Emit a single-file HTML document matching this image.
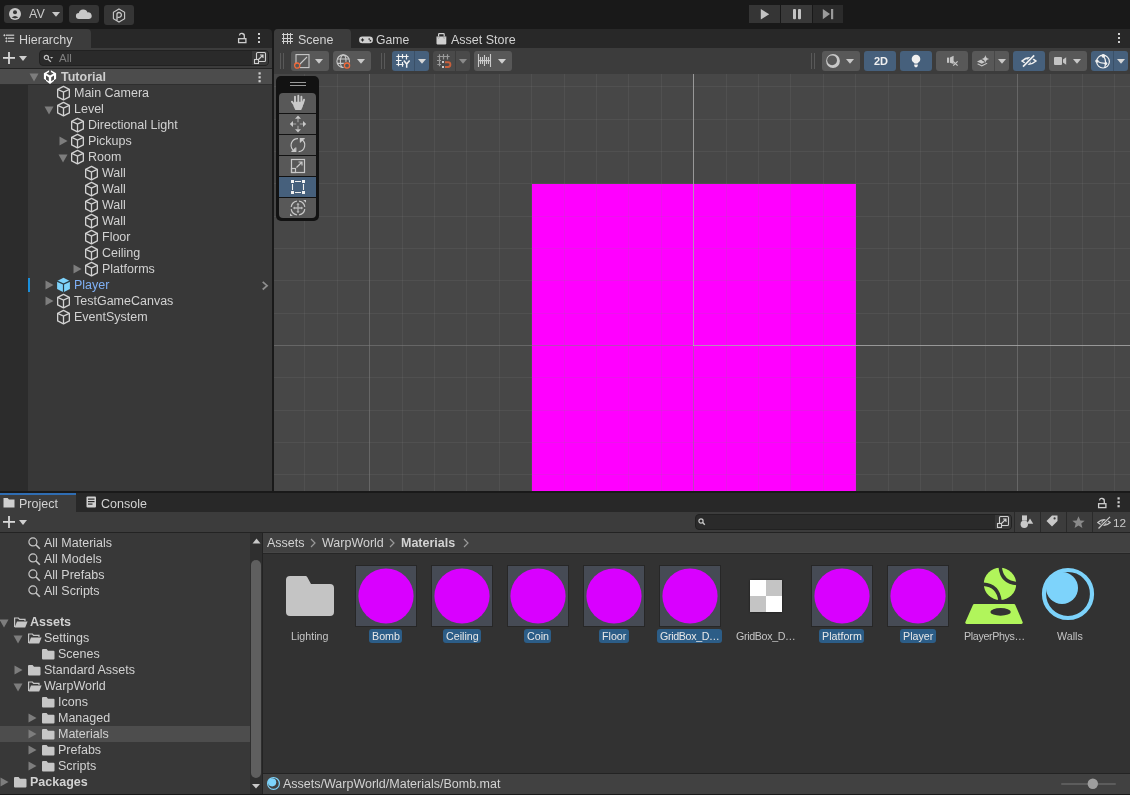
<!DOCTYPE html><html><head><meta charset="utf-8"><style>
html,body{margin:0;padding:0;width:1130px;height:795px;overflow:hidden;background:#191919;}
body{position:relative;font-family:"Liberation Sans", sans-serif;}
.t{position:absolute;white-space:nowrap;will-change:transform;}
svg{overflow:visible}
</style></head><body>
<div style="position:absolute;left:0px;top:0px;width:1130px;height:28px;background:#191919;"></div>
<div style="position:absolute;left:4px;top:5px;width:59px;height:18px;background:#353535;border-radius:3px;"></div>
<div style="position:absolute;left:69px;top:5px;width:30px;height:18px;background:#353535;border-radius:3px;"></div>
<div style="position:absolute;left:104px;top:5px;width:30px;height:20px;background:#353535;border-radius:3px;"></div>
<div style="position:absolute;left:749px;top:5px;width:31px;height:18px;background:#353535;"></div>
<div style="position:absolute;left:781px;top:5px;width:31px;height:18px;background:#393939;"></div>
<div style="position:absolute;left:813px;top:5px;width:30px;height:18px;background:#2b2b2b;"></div>
<svg style="position:absolute;left:9px;top:8px;" width="12" height="12" viewBox="0 0 12 12"><circle cx="6" cy="6" r="6" fill="#c8c8c8"/><circle cx="6" cy="4.3" r="2" fill="#353535"/><path d="M2.6 9.6 Q6 6.6 9.4 9.6 Q6 11.2 2.6 9.6 Z" fill="#353535"/></svg>
<div class="t" style="left:29px;top:6px;font-size:12.5px;line-height:16px;color:#c8c8c8;font-weight:normal;">AV</div>
<svg style="position:absolute;left:52px;top:12px;" width="8" height="5" viewBox="0 0 8 5"><path d="M0 0 L8 0 L4 4.8 Z" fill="#c8c8c8"/></svg>
<svg style="position:absolute;left:76px;top:9px;" width="16" height="10" viewBox="0 0 16 10"><path d="M3 10 a3 3 0 0 1 -0.2 -6 a4.6 4.6 0 0 1 8.8 -0.6 a3.2 3.2 0 0 1 1.4 6.6 Z" fill="#c8c8c8"/></svg>
<svg style="position:absolute;left:112px;top:8px;" width="14" height="15" viewBox="0 0 14 15"><path d="M7 1 L12.6 4.2 L12.6 10.8 L7 14 L1.4 10.8 L1.4 4.2 Z" fill="none" stroke="#c8c8c8" stroke-width="1.1"/><path d="M5 12.5 V5.6 a2.4 2.4 0 1 1 2 3.7 H5.8" fill="none" stroke="#c8c8c8" stroke-width="1.3"/></svg>
<svg style="position:absolute;left:760px;top:9px;" width="10" height="11" viewBox="0 0 10 11"><path d="M0.8 0 L9.2 5.2 L0.8 10.4 Z" fill="#c4c4c4"/></svg>
<svg style="position:absolute;left:793px;top:9px;" width="9" height="11" viewBox="0 0 9 11"><rect x="0" y="0" width="3" height="10.2" rx="1" fill="#c4c4c4"/><rect x="5" y="0" width="3" height="10.2" rx="1" fill="#c4c4c4"/></svg>
<svg style="position:absolute;left:822px;top:9px;" width="12" height="11" viewBox="0 0 12 11"><path d="M0.8 0 L8 5.1 L0.8 10.2 Z" fill="#9a9a9a"/><rect x="9" y="0" width="2.2" height="10.2" fill="#9a9a9a"/></svg>
<div style="position:absolute;left:0px;top:29px;width:272px;height:462px;background:#282828;border-radius:4px 4px 0 0;"></div>
<div style="position:absolute;left:0px;top:29px;width:91px;height:20px;background:#3c3c3c;border-radius:0 4px 0 0;"></div>
<div style="position:absolute;left:0px;top:48px;width:272px;height:20px;background:#3c3c3c;"></div>
<div style="position:absolute;left:0px;top:68px;width:272px;height:1px;background:#232323;"></div>
<div style="position:absolute;left:0px;top:69px;width:272px;height:422px;background:#383838;"></div>
<div style="position:absolute;left:0px;top:69px;width:28px;height:422px;background:#2c2c2c;"></div>
<div style="position:absolute;left:0px;top:69px;width:272px;height:15px;background:#4c4c4c;"></div>
<div style="position:absolute;left:0px;top:84px;width:272px;height:1px;background:#2e2e2e;"></div>
<svg style="position:absolute;left:2px;top:31px;" width="16" height="16" viewBox="0 0 16 16"><g fill="#cfcfcf"><rect x="4" y="3.6" width="8.2" height="1.2"/><rect x="6" y="6.6" width="6.2" height="1.2"/><rect x="6" y="9.7" width="6.2" height="1.2"/><path d="M2.4 3 L3.6 4.2 L2.4 5.4 L1.2 4.2 Z"/><path d="M4.4 6 L5.6 7.2 L4.4 8.4 L3.2 7.2 Z"/><path d="M4.4 9.1 L5.6 10.3 L4.4 11.5 L3.2 10.3 Z"/></g><rect x="4.1" y="8" width="0.6" height="1.6" fill="#8a8a8a"/></svg>
<div class="t" style="left:19px;top:32px;font-size:12.5px;line-height:16px;color:#d2d2d2;font-weight:normal;">Hierarchy</div>
<svg style="position:absolute;left:237px;top:32px;" width="10" height="12" viewBox="0 0 10 12"><rect x="1.6" y="6.7" width="7.3" height="3.9" fill="none" stroke="#cfcfcf" stroke-width="1.3"/><path d="M7.3 6.4 V4.2 A2.5 2.5 0 0 0 2.4 3.3" fill="none" stroke="#cfcfcf" stroke-width="1.3"/></svg>
<div style="position:absolute;left:258px;top:33px;width:2px;height:2px;background:#cfcfcf;"></div>
<div style="position:absolute;left:258px;top:37px;width:2px;height:2px;background:#cfcfcf;"></div>
<div style="position:absolute;left:258px;top:41px;width:2px;height:2px;background:#cfcfcf;"></div>
<svg style="position:absolute;left:3px;top:52px;" width="12" height="12" viewBox="0 0 12 12"><rect x="0" y="5" width="12" height="1.8" fill="#d8d8d8"/><rect x="5.1" y="0" width="1.8" height="12" fill="#d8d8d8"/></svg>
<svg style="position:absolute;left:19px;top:56px;" width="8" height="5" viewBox="0 0 8 5"><path d="M0 0 L8 0 L4 5 Z" fill="#cfcfcf"/></svg>
<div style="position:absolute;left:39px;top:50px;width:230px;height:16px;background:#2a2a2a;border-radius:4px;box-sizing:border-box;border:1px solid #212121;"></div>
<div style="position:absolute;left:252px;top:51px;width:16px;height:14px;background:#383838;border-radius:0 3px 3px 0;"></div>
<svg style="position:absolute;left:44px;top:53px;" width="12" height="10" viewBox="0 0 12 10"><circle cx="2.4" cy="4.4" r="2.1" fill="none" stroke="#c4c4c4" stroke-width="1.2"/><path d="M4.2 6.2 L6.9 8.9" stroke="#c4c4c4" stroke-width="1.3"/><path d="M6 4 L9.2 4 L7.6 5.8 Z" fill="#c4c4c4"/></svg>
<div class="t" style="left:59px;top:50px;font-size:11.5px;line-height:16px;color:#7f7f7f;font-weight:normal;">All</div>
<svg style="position:absolute;left:254px;top:52px;" width="12" height="12" viewBox="0 0 12 12"><rect x="2.5" y="0.5" width="9" height="9" rx="1" fill="none" stroke="#cfcfcf" stroke-width="1.1"/><rect x="0.5" y="7.5" width="4" height="4" fill="#383838" stroke="#cfcfcf" stroke-width="1.1"/><path d="M4.5 7.5 L9 3 M6 3 H9 V6" fill="none" stroke="#cfcfcf" stroke-width="1.1"/></svg>
<svg style="position:absolute;left:29px;top:73px;" width="10" height="9" viewBox="0 0 10 9"><path d="M0.5 0.5 L9.5 0.5 L5 8.5 Z" fill="#7d7d7d"/></svg>
<svg style="position:absolute;left:43px;top:69px;" width="14" height="16" viewBox="0 0 14 16"><path d="M7 0.8 L13.1 4.3 L13.1 10.2 L7 14.9 L0.9 10.2 L0.9 4.3 Z" fill="#ffffff"/><g fill="#4c4c4c"><path d="M3.4 4.6 L6.1 3 V0 H7.9 V3 L10.6 4.6 L7 6.6 Z"/><path d="M3 6.6 L5.8 8.2 V12.2 L3 10.4 Z"/><path d="M11 6.6 L8.2 8.2 V12.2 L11 10.4 Z"/><path d="M0 9.4 L3 11.2 V12.6 L0 10.8 Z"/><path d="M14 9.4 L11 11.2 V12.6 L14 10.8 Z"/><path d="M0 0 H5.4 L0.9 3 Z"/><path d="M14 0 H8.6 L13.1 3 Z"/></g></svg>
<div class="t" style="left:61px;top:69px;font-size:12.5px;line-height:16px;color:#cecece;font-weight:bold;">Tutorial</div>
<svg style="position:absolute;left:258px;top:72px;" width="4" height="11" viewBox="0 0 4 11"><g fill="#cfcfcf"><rect x="0.5" y="0.3" width="2.2" height="2.2"/><rect x="0.5" y="4.2" width="2.2" height="2.2"/><rect x="0.5" y="8.1" width="2.2" height="2.2"/></g></svg>
<svg style="position:absolute;left:57px;top:85px;" width="13" height="16" viewBox="0 0 13 16"><path d="M6.5 1.3 L12.35 4.3 L12.35 11.9 L6.5 14.8 L0.65 11.9 L0.65 4.3 Z" fill="none" stroke="#d2d2d2" stroke-width="1.3" stroke-linejoin="round"/><path d="M0.65 4.3 L6.5 7.1 L12.35 4.3 M6.5 7.1 V14.8" fill="none" stroke="#d2d2d2" stroke-width="1.3"/></svg>
<div class="t" style="left:73.8px;top:85px;font-size:12.5px;line-height:16px;color:#d2d2d2;font-weight:normal;">Main Camera</div>
<svg style="position:absolute;left:44px;top:106px;" width="10" height="9" viewBox="0 0 10 9"><path d="M0.5 0.5 L9.5 0.5 L5 8.5 Z" fill="#7d7d7d"/></svg>
<svg style="position:absolute;left:57px;top:101px;" width="13" height="16" viewBox="0 0 13 16"><path d="M6.5 1.3 L12.35 4.3 L12.35 11.9 L6.5 14.8 L0.65 11.9 L0.65 4.3 Z" fill="none" stroke="#d2d2d2" stroke-width="1.3" stroke-linejoin="round"/><path d="M0.65 4.3 L6.5 7.1 L12.35 4.3 M6.5 7.1 V14.8" fill="none" stroke="#d2d2d2" stroke-width="1.3"/></svg>
<div class="t" style="left:73.8px;top:101px;font-size:12.5px;line-height:16px;color:#d2d2d2;font-weight:normal;">Level</div>
<svg style="position:absolute;left:71px;top:117px;" width="13" height="16" viewBox="0 0 13 16"><path d="M6.5 1.3 L12.35 4.3 L12.35 11.9 L6.5 14.8 L0.65 11.9 L0.65 4.3 Z" fill="none" stroke="#d2d2d2" stroke-width="1.3" stroke-linejoin="round"/><path d="M0.65 4.3 L6.5 7.1 L12.35 4.3 M6.5 7.1 V14.8" fill="none" stroke="#d2d2d2" stroke-width="1.3"/></svg>
<div class="t" style="left:87.8px;top:117px;font-size:12.5px;line-height:16px;color:#d2d2d2;font-weight:normal;">Directional Light</div>
<svg style="position:absolute;left:59px;top:136px;" width="9" height="10" viewBox="0 0 9 10"><path d="M0.5 0.5 L8.5 5 L0.5 9.5 Z" fill="#7d7d7d"/></svg>
<svg style="position:absolute;left:71px;top:133px;" width="13" height="16" viewBox="0 0 13 16"><path d="M6.5 1.3 L12.35 4.3 L12.35 11.9 L6.5 14.8 L0.65 11.9 L0.65 4.3 Z" fill="none" stroke="#d2d2d2" stroke-width="1.3" stroke-linejoin="round"/><path d="M0.65 4.3 L6.5 7.1 L12.35 4.3 M6.5 7.1 V14.8" fill="none" stroke="#d2d2d2" stroke-width="1.3"/></svg>
<div class="t" style="left:87.8px;top:133px;font-size:12.5px;line-height:16px;color:#d2d2d2;font-weight:normal;">Pickups</div>
<svg style="position:absolute;left:58px;top:154px;" width="10" height="9" viewBox="0 0 10 9"><path d="M0.5 0.5 L9.5 0.5 L5 8.5 Z" fill="#7d7d7d"/></svg>
<svg style="position:absolute;left:71px;top:149px;" width="13" height="16" viewBox="0 0 13 16"><path d="M6.5 1.3 L12.35 4.3 L12.35 11.9 L6.5 14.8 L0.65 11.9 L0.65 4.3 Z" fill="none" stroke="#d2d2d2" stroke-width="1.3" stroke-linejoin="round"/><path d="M0.65 4.3 L6.5 7.1 L12.35 4.3 M6.5 7.1 V14.8" fill="none" stroke="#d2d2d2" stroke-width="1.3"/></svg>
<div class="t" style="left:87.8px;top:149px;font-size:12.5px;line-height:16px;color:#d2d2d2;font-weight:normal;">Room</div>
<svg style="position:absolute;left:85px;top:165px;" width="13" height="16" viewBox="0 0 13 16"><path d="M6.5 1.3 L12.35 4.3 L12.35 11.9 L6.5 14.8 L0.65 11.9 L0.65 4.3 Z" fill="none" stroke="#d2d2d2" stroke-width="1.3" stroke-linejoin="round"/><path d="M0.65 4.3 L6.5 7.1 L12.35 4.3 M6.5 7.1 V14.8" fill="none" stroke="#d2d2d2" stroke-width="1.3"/></svg>
<div class="t" style="left:101.8px;top:165px;font-size:12.5px;line-height:16px;color:#d2d2d2;font-weight:normal;">Wall</div>
<svg style="position:absolute;left:85px;top:181px;" width="13" height="16" viewBox="0 0 13 16"><path d="M6.5 1.3 L12.35 4.3 L12.35 11.9 L6.5 14.8 L0.65 11.9 L0.65 4.3 Z" fill="none" stroke="#d2d2d2" stroke-width="1.3" stroke-linejoin="round"/><path d="M0.65 4.3 L6.5 7.1 L12.35 4.3 M6.5 7.1 V14.8" fill="none" stroke="#d2d2d2" stroke-width="1.3"/></svg>
<div class="t" style="left:101.8px;top:181px;font-size:12.5px;line-height:16px;color:#d2d2d2;font-weight:normal;">Wall</div>
<svg style="position:absolute;left:85px;top:197px;" width="13" height="16" viewBox="0 0 13 16"><path d="M6.5 1.3 L12.35 4.3 L12.35 11.9 L6.5 14.8 L0.65 11.9 L0.65 4.3 Z" fill="none" stroke="#d2d2d2" stroke-width="1.3" stroke-linejoin="round"/><path d="M0.65 4.3 L6.5 7.1 L12.35 4.3 M6.5 7.1 V14.8" fill="none" stroke="#d2d2d2" stroke-width="1.3"/></svg>
<div class="t" style="left:101.8px;top:197px;font-size:12.5px;line-height:16px;color:#d2d2d2;font-weight:normal;">Wall</div>
<svg style="position:absolute;left:85px;top:213px;" width="13" height="16" viewBox="0 0 13 16"><path d="M6.5 1.3 L12.35 4.3 L12.35 11.9 L6.5 14.8 L0.65 11.9 L0.65 4.3 Z" fill="none" stroke="#d2d2d2" stroke-width="1.3" stroke-linejoin="round"/><path d="M0.65 4.3 L6.5 7.1 L12.35 4.3 M6.5 7.1 V14.8" fill="none" stroke="#d2d2d2" stroke-width="1.3"/></svg>
<div class="t" style="left:101.8px;top:213px;font-size:12.5px;line-height:16px;color:#d2d2d2;font-weight:normal;">Wall</div>
<svg style="position:absolute;left:85px;top:229px;" width="13" height="16" viewBox="0 0 13 16"><path d="M6.5 1.3 L12.35 4.3 L12.35 11.9 L6.5 14.8 L0.65 11.9 L0.65 4.3 Z" fill="none" stroke="#d2d2d2" stroke-width="1.3" stroke-linejoin="round"/><path d="M0.65 4.3 L6.5 7.1 L12.35 4.3 M6.5 7.1 V14.8" fill="none" stroke="#d2d2d2" stroke-width="1.3"/></svg>
<div class="t" style="left:101.8px;top:229px;font-size:12.5px;line-height:16px;color:#d2d2d2;font-weight:normal;">Floor</div>
<svg style="position:absolute;left:85px;top:245px;" width="13" height="16" viewBox="0 0 13 16"><path d="M6.5 1.3 L12.35 4.3 L12.35 11.9 L6.5 14.8 L0.65 11.9 L0.65 4.3 Z" fill="none" stroke="#d2d2d2" stroke-width="1.3" stroke-linejoin="round"/><path d="M0.65 4.3 L6.5 7.1 L12.35 4.3 M6.5 7.1 V14.8" fill="none" stroke="#d2d2d2" stroke-width="1.3"/></svg>
<div class="t" style="left:101.8px;top:245px;font-size:12.5px;line-height:16px;color:#d2d2d2;font-weight:normal;">Ceiling</div>
<svg style="position:absolute;left:73px;top:264px;" width="9" height="10" viewBox="0 0 9 10"><path d="M0.5 0.5 L8.5 5 L0.5 9.5 Z" fill="#7d7d7d"/></svg>
<svg style="position:absolute;left:85px;top:261px;" width="13" height="16" viewBox="0 0 13 16"><path d="M6.5 1.3 L12.35 4.3 L12.35 11.9 L6.5 14.8 L0.65 11.9 L0.65 4.3 Z" fill="none" stroke="#d2d2d2" stroke-width="1.3" stroke-linejoin="round"/><path d="M0.65 4.3 L6.5 7.1 L12.35 4.3 M6.5 7.1 V14.8" fill="none" stroke="#d2d2d2" stroke-width="1.3"/></svg>
<div class="t" style="left:101.8px;top:261px;font-size:12.5px;line-height:16px;color:#d2d2d2;font-weight:normal;">Platforms</div>
<svg style="position:absolute;left:45px;top:280px;" width="9" height="10" viewBox="0 0 9 10"><path d="M0.5 0.5 L8.5 5 L0.5 9.5 Z" fill="#7d7d7d"/></svg>
<svg style="position:absolute;left:57px;top:277px;" width="13" height="16" viewBox="0 0 13 16"><path d="M6.5 0.8 L12.9 4.1 L12.9 12.1 L6.5 15.3 L0.1 12.1 L0.1 4.1 Z" fill="#7ed3fb"/><path d="M0.1 4.1 L6.5 7.1 L12.9 4.1 M6.5 7.1 V15.3" fill="none" stroke="#2b3c47" stroke-width="1.2"/></svg>
<div class="t" style="left:73.8px;top:277px;font-size:12.5px;line-height:16px;color:#7fb0f5;font-weight:normal;">Player</div>
<div style="position:absolute;left:28px;top:278px;width:2px;height:14px;background:#1a8fdc;"></div>
<svg style="position:absolute;left:261px;top:281px;" width="8" height="10" viewBox="0 0 8 10"><path d="M1.7 0.9 L6.1 4.7 L1.7 8.5" fill="none" stroke="#8e8e8e" stroke-width="1.7"/></svg>
<svg style="position:absolute;left:45px;top:296px;" width="9" height="10" viewBox="0 0 9 10"><path d="M0.5 0.5 L8.5 5 L0.5 9.5 Z" fill="#7d7d7d"/></svg>
<svg style="position:absolute;left:57px;top:293px;" width="13" height="16" viewBox="0 0 13 16"><path d="M6.5 1.3 L12.35 4.3 L12.35 11.9 L6.5 14.8 L0.65 11.9 L0.65 4.3 Z" fill="none" stroke="#d2d2d2" stroke-width="1.3" stroke-linejoin="round"/><path d="M0.65 4.3 L6.5 7.1 L12.35 4.3 M6.5 7.1 V14.8" fill="none" stroke="#d2d2d2" stroke-width="1.3"/></svg>
<div class="t" style="left:73.8px;top:293px;font-size:12.5px;line-height:16px;color:#d2d2d2;font-weight:normal;">TestGameCanvas</div>
<svg style="position:absolute;left:57px;top:309px;" width="13" height="16" viewBox="0 0 13 16"><path d="M6.5 1.3 L12.35 4.3 L12.35 11.9 L6.5 14.8 L0.65 11.9 L0.65 4.3 Z" fill="none" stroke="#d2d2d2" stroke-width="1.3" stroke-linejoin="round"/><path d="M0.65 4.3 L6.5 7.1 L12.35 4.3 M6.5 7.1 V14.8" fill="none" stroke="#d2d2d2" stroke-width="1.3"/></svg>
<div class="t" style="left:73.8px;top:309px;font-size:12.5px;line-height:16px;color:#d2d2d2;font-weight:normal;">EventSystem</div>
<div style="position:absolute;left:274px;top:29px;width:856px;height:462px;background:#282828;border-radius:4px 0 0 0;"></div>
<div style="position:absolute;left:274px;top:29px;width:77px;height:20px;background:#3c3c3c;border-radius:4px 4px 0 0;"></div>
<div style="position:absolute;left:274px;top:48px;width:856px;height:26px;background:#3c3c3c;"></div>
<svg style="position:absolute;left:282px;top:33px;" width="11" height="11" viewBox="0 0 11 11"><g stroke="#d0d0d0" stroke-width="1"><path d="M1.5 0 V11 M5.5 0 V11 M8.5 0 V11 M0 1.5 H11 M0 5.5 H11 M0 8.5 H11"/></g></svg>
<div class="t" style="left:298px;top:32px;font-size:12.5px;line-height:16px;color:#d2d2d2;font-weight:normal;">Scene</div>
<svg style="position:absolute;left:359px;top:35.5px;" width="14" height="8" viewBox="0 0 14 8"><path d="M3.4 0.6 H10.6 a3.3 3.3 0 0 1 0 6.6 H3.4 a3.3 3.3 0 0 1 0 -6.6 Z" fill="#d0d0d0"/><rect x="1.9" y="3.4" width="3.2" height="1.1" fill="#282828"/><rect x="2.95" y="2.35" width="1.1" height="3.2" fill="#282828"/><circle cx="10.2" cy="3" r="0.85" fill="#282828"/><circle cx="11.4" cy="4.7" r="0.85" fill="#282828"/></svg>
<div class="t" style="left:376px;top:32px;font-size:12.2px;line-height:16px;color:#d2d2d2;font-weight:normal;">Game</div>
<svg style="position:absolute;left:435.5px;top:33px;" width="11" height="12" viewBox="0 0 11 12"><path d="M0.5 3.6 H10.3 V10.6 a0.8 0.8 0 0 1 -0.8 0.8 H1.3 a0.8 0.8 0 0 1 -0.8 -0.8 Z" fill="#d0d0d0"/><path d="M2.6 3.6 V1.4 a0.7 0.7 0 0 1 0.7 -0.7 H7.5 a0.7 0.7 0 0 1 0.7 0.7 V3.6" fill="none" stroke="#d0d0d0" stroke-width="1.2"/><path d="M1.8 4.4 L2.6 5.4 L3.4 4.4 M7.4 4.4 L8.2 5.4 L9 4.4" fill="none" stroke="#8a8a8a" stroke-width="0.7"/></svg>
<div class="t" style="left:451px;top:32px;font-size:12.5px;line-height:16px;color:#d2d2d2;font-weight:normal;">Asset Store</div>
<div style="position:absolute;left:1118px;top:33px;width:2px;height:2px;background:#d0d0d0;"></div>
<div style="position:absolute;left:1118px;top:37px;width:2px;height:2px;background:#d0d0d0;"></div>
<div style="position:absolute;left:1118px;top:41px;width:2px;height:2px;background:#d0d0d0;"></div>
<div style="position:absolute;left:280px;top:53px;width:1px;height:16px;background:#595959;"></div>
<div style="position:absolute;left:283px;top:53px;width:1px;height:16px;background:#595959;"></div>
<div style="position:absolute;left:291px;top:51px;width:38px;height:20px;background:#585858;border-radius:3px;"></div>
<svg style="position:absolute;left:294px;top:54px;" width="16" height="16" viewBox="0 0 16 16"><rect x="2" y="0.6" width="13" height="13" fill="none" stroke="#c8c8c8" stroke-width="1.1"/><path d="M5.5 10.5 L13 3" stroke="#c8c8c8" stroke-width="1.1"/><rect x="0" y="9" width="6" height="6" fill="#585858"/><circle cx="3.2" cy="11.6" r="2.6" fill="none" stroke="#f26a3a" stroke-width="1.3"/></svg>
<svg style="position:absolute;left:315px;top:59px;" width="8" height="5" viewBox="0 0 8 5"><path d="M0 0 L8 0 L4 4.8 Z" fill="#c8c8c8"/></svg>
<div style="position:absolute;left:333px;top:51px;width:38px;height:20px;background:#585858;border-radius:3px;"></div>
<svg style="position:absolute;left:336px;top:54px;" width="16" height="16" viewBox="0 0 16 16"><circle cx="7.2" cy="7.2" r="6.3" fill="none" stroke="#c8c8c8" stroke-width="1.1"/><ellipse cx="7.2" cy="7.2" rx="2.8" ry="6.3" fill="none" stroke="#c8c8c8" stroke-width="1.1"/><path d="M1 5 H13.4 M1 9.4 H13.4" stroke="#c8c8c8" stroke-width="1.1"/><circle cx="11" cy="11.6" r="3.8" fill="#585858"/><circle cx="11" cy="11.6" r="2.6" fill="none" stroke="#f26a3a" stroke-width="1.3"/></svg>
<svg style="position:absolute;left:357px;top:59px;" width="8" height="5" viewBox="0 0 8 5"><path d="M0 0 L8 0 L4 4.8 Z" fill="#c8c8c8"/></svg>
<div style="position:absolute;left:381px;top:53px;width:1px;height:16px;background:#595959;"></div>
<div style="position:absolute;left:384px;top:53px;width:1px;height:16px;background:#595959;"></div>
<div style="position:absolute;left:392px;top:51px;width:37px;height:20px;background:#46607c;border-radius:3px;"></div>
<div style="position:absolute;left:414px;top:51px;width:1px;height:20px;background:#3a5068;"></div>
<svg style="position:absolute;left:393px;top:51px;" width="20" height="20" viewBox="0 0 20 20"><g stroke="#f2f2f2" stroke-width="1.2" fill="none"><path d="M5.5 3.3 V15.3 M9.5 3 V7.6 M9.5 11 V15.8 M13.5 3.3 V8.5 M3.3 5.5 H15.6 M3 9.5 H8.5 M3.3 13.5 H10.6"/><path d="M10.8 9.6 L13.7 13.1 L16.6 9.6 M13.7 13.1 V16.8" stroke-width="1.5"/></g></svg>
<svg style="position:absolute;left:418px;top:59px;" width="8" height="5" viewBox="0 0 8 5"><path d="M0 0 L8 0 L4 4.8 Z" fill="#d8d8d8"/></svg>
<div style="position:absolute;left:433px;top:51px;width:37px;height:20px;background:#4a4a4a;border-radius:3px;"></div>
<div style="position:absolute;left:455px;top:51px;width:1px;height:20px;background:#3c3c3c;"></div>
<svg style="position:absolute;left:434px;top:51px;" width="20" height="20" viewBox="0 0 20 20"><g stroke="#9a9a9a" stroke-width="1.2" fill="none"><path d="M5.5 3.3 V15.3 M9.5 3 V8.5 M13.5 3.3 V8.5 M3.3 5.5 H15.6 M3 9.5 H7 M3.3 13.5 H7"/></g><rect x="8" y="10" width="2" height="2" fill="#c8c8c8"/><rect x="8" y="15" width="2" height="2" fill="#c8c8c8"/><path d="M11 11.2 H14 a2.4 2.4 0 0 1 0 4.8 H11" fill="none" stroke="#c8603c" stroke-width="1.9"/></svg>
<svg style="position:absolute;left:459px;top:59px;" width="8" height="5" viewBox="0 0 8 5"><path d="M0 0 L8 0 L4 4.8 Z" fill="#8a8a8a"/></svg>
<div style="position:absolute;left:474px;top:51px;width:38px;height:20px;background:#585858;border-radius:3px;"></div>
<svg style="position:absolute;left:475px;top:51px;" width="20" height="20" viewBox="0 0 20 20"><g stroke="#cbcbcb" stroke-width="1.1" fill="none"><path d="M3.5 3 V16 M15.5 3 V16 M3.5 9.6 H15.5 M9.5 4 V15 M5.5 6 V13 M7.5 6 V13 M11.5 6 V13 M13.5 6 V13"/></g></svg>
<svg style="position:absolute;left:498px;top:59px;" width="8" height="5" viewBox="0 0 8 5"><path d="M0 0 L8 0 L4 4.8 Z" fill="#d0d0d0"/></svg>
<div style="position:absolute;left:811px;top:53px;width:1px;height:16px;background:#595959;"></div>
<div style="position:absolute;left:814px;top:53px;width:1px;height:16px;background:#595959;"></div>
<div style="position:absolute;left:822px;top:51px;width:38px;height:20px;background:#585858;border-radius:3px;"></div>
<svg style="position:absolute;left:826px;top:54px;" width="14" height="14" viewBox="0 0 14 14"><circle cx="7" cy="7" r="6.9" fill="#c8c8c8"/><circle cx="6.1" cy="6.3" r="4.9" fill="#585858"/></svg>
<svg style="position:absolute;left:846px;top:59px;" width="8" height="5" viewBox="0 0 8 5"><path d="M0 0 L8 0 L4 4.8 Z" fill="#c8c8c8"/></svg>
<div style="position:absolute;left:864px;top:51px;width:32px;height:20px;background:#46607c;border-radius:3px;"></div>
<div class="t" style="left:873.5px;top:52.5px;font-size:11px;line-height:16px;color:#f0f0f0;font-weight:bold;">2D</div>
<div style="position:absolute;left:900px;top:51px;width:32px;height:20px;background:#46607c;border-radius:3px;"></div>
<svg style="position:absolute;left:911px;top:54px;" width="10" height="14" viewBox="0 0 10 14"><circle cx="5" cy="5" r="4.3" fill="#f0f0f0"/><path d="M2.6 7.5 L3.4 9.6 H6.6 L7.4 7.5 Z" fill="#f0f0f0"/><path d="M3.2 10.4 H6.8 V11.6 a1.8 1.8 0 0 1 -3.6 0 Z" fill="#f0f0f0"/></svg>
<div style="position:absolute;left:936px;top:51px;width:32px;height:20px;background:#585858;border-radius:3px;"></div>
<svg style="position:absolute;left:946px;top:55px;" width="14" height="12" viewBox="0 0 14 12"><rect x="1" y="2.6" width="2.2" height="5.2" fill="#c4c4c4"/><path d="M4 2.6 L7.6 0.8 V9 L4 7.8 Z" fill="#c4c4c4"/><path d="M7.2 6.4 L11.6 10.6 M11.6 6.4 L7.2 10.6" stroke="#c4c4c4" stroke-width="1.3"/></svg>
<div style="position:absolute;left:972px;top:51px;width:37px;height:20px;background:#585858;border-radius:3px;"></div>
<div style="position:absolute;left:994px;top:51px;width:1px;height:20px;background:#474747;"></div>
<svg style="position:absolute;left:976px;top:54px;" width="16" height="14" viewBox="0 0 16 14"><path d="M1 7.6 L5.2 5.6 L6.4 6.8 L9 8 L5.8 9.8 Z" fill="#c8c8c8"/><path d="M1 10 L5.8 12.4 L11.6 9.6 L10.4 9 L5.8 11.2 L2.2 9.4 Z" fill="#c8c8c8"/><path d="M9.4 1 Q9.9 4.6 13.2 5 Q9.9 5.4 9.4 9 Q8.9 5.4 5.6 5 Q8.9 4.6 9.4 1 Z" fill="#c8c8c8"/></svg>
<svg style="position:absolute;left:998px;top:59px;" width="8" height="5" viewBox="0 0 8 5"><path d="M0 0 L8 0 L4 4.8 Z" fill="#c8c8c8"/></svg>
<div style="position:absolute;left:1013px;top:51px;width:32px;height:20px;background:#46607c;border-radius:3px;"></div>
<svg style="position:absolute;left:1020px;top:54px;" width="18" height="14" viewBox="0 0 18 14"><path d="M2 7 Q9 0.8 16 7 Q9 13.2 2 7 Z" fill="none" stroke="#f0f0f0" stroke-width="1.5"/><circle cx="9" cy="7" r="2.2" fill="#f0f0f0"/><path d="M3 13 L14.5 1.2" stroke="#46607c" stroke-width="3.4"/><path d="M3 12.6 L14.2 1.4" stroke="#f0f0f0" stroke-width="1.6"/></svg>
<div style="position:absolute;left:1049px;top:51px;width:38px;height:20px;background:#585858;border-radius:3px;"></div>
<svg style="position:absolute;left:1053px;top:55px;" width="15" height="12" viewBox="0 0 15 12"><rect x="1" y="2" width="8" height="8" rx="1" fill="#c4c4c4"/><path d="M10 4.6 L13.2 2.2 V9.8 L10 7.4 Z" fill="#c4c4c4"/></svg>
<svg style="position:absolute;left:1073px;top:59px;" width="8" height="5" viewBox="0 0 8 5"><path d="M0 0 L8 0 L4 4.8 Z" fill="#c8c8c8"/></svg>
<div style="position:absolute;left:1091px;top:51px;width:37px;height:20px;background:#46607c;border-radius:3px;"></div>
<div style="position:absolute;left:1113px;top:51px;width:1px;height:20px;background:#3a5068;"></div>
<svg style="position:absolute;left:1094.5px;top:53.5px;" width="16" height="16" viewBox="0 0 16 16"><g fill="none" stroke="#f0f0f0" stroke-width="1.2"><circle cx="8" cy="7.6" r="6.4"/><path d="M8.3 1.9 Q10.6 4.5 10.8 9.4 M1.9 7.1 Q5.5 9.6 10.8 9.4 M10.8 9.4 L9.6 14"/></g><g fill="#f0f0f0"><circle cx="8.3" cy="1.9" r="1.8"/><circle cx="1.9" cy="7.1" r="1.7"/><circle cx="10.8" cy="9.4" r="1.5"/></g></svg>
<svg style="position:absolute;left:1117px;top:59px;" width="8" height="5" viewBox="0 0 8 5"><path d="M0 0 L8 0 L4 4.8 Z" fill="#d8d8d8"/></svg>
<div style="position:absolute;left:274px;top:74px;width:856px;height:417px;background:#474747;"></div>
<div style="position:absolute;left:532px;top:184px;width:324px;height:307px;background:#ff00ff;"></div>
<div style="position:absolute;left:304px;top:74px;width:1px;height:417px;background:rgba(128,128,128,0.16);"></div>
<div style="position:absolute;left:337px;top:74px;width:1px;height:417px;background:rgba(128,128,128,0.16);"></div>
<div style="position:absolute;left:369px;top:74px;width:1px;height:417px;background:rgba(128,128,128,0.55);"></div>
<div style="position:absolute;left:402px;top:74px;width:1px;height:417px;background:rgba(128,128,128,0.16);"></div>
<div style="position:absolute;left:434px;top:74px;width:1px;height:417px;background:rgba(128,128,128,0.16);"></div>
<div style="position:absolute;left:466px;top:74px;width:1px;height:417px;background:rgba(128,128,128,0.16);"></div>
<div style="position:absolute;left:499px;top:74px;width:1px;height:417px;background:rgba(128,128,128,0.16);"></div>
<div style="position:absolute;left:531px;top:74px;width:1px;height:417px;background:rgba(128,128,128,0.16);"></div>
<div style="position:absolute;left:564px;top:74px;width:1px;height:417px;background:rgba(128,128,128,0.16);"></div>
<div style="position:absolute;left:596px;top:74px;width:1px;height:417px;background:rgba(128,128,128,0.16);"></div>
<div style="position:absolute;left:628px;top:74px;width:1px;height:417px;background:rgba(128,128,128,0.16);"></div>
<div style="position:absolute;left:661px;top:74px;width:1px;height:417px;background:rgba(128,128,128,0.16);"></div>
<div style="position:absolute;left:693px;top:74px;width:1px;height:417px;background:rgba(128,128,128,0.55);"></div>
<div style="position:absolute;left:726px;top:74px;width:1px;height:417px;background:rgba(128,128,128,0.16);"></div>
<div style="position:absolute;left:758px;top:74px;width:1px;height:417px;background:rgba(128,128,128,0.16);"></div>
<div style="position:absolute;left:790px;top:74px;width:1px;height:417px;background:rgba(128,128,128,0.16);"></div>
<div style="position:absolute;left:823px;top:74px;width:1px;height:417px;background:rgba(128,128,128,0.16);"></div>
<div style="position:absolute;left:855px;top:74px;width:1px;height:417px;background:rgba(128,128,128,0.16);"></div>
<div style="position:absolute;left:888px;top:74px;width:1px;height:417px;background:rgba(128,128,128,0.16);"></div>
<div style="position:absolute;left:920px;top:74px;width:1px;height:417px;background:rgba(128,128,128,0.16);"></div>
<div style="position:absolute;left:952px;top:74px;width:1px;height:417px;background:rgba(128,128,128,0.16);"></div>
<div style="position:absolute;left:985px;top:74px;width:1px;height:417px;background:rgba(128,128,128,0.16);"></div>
<div style="position:absolute;left:1017px;top:74px;width:1px;height:417px;background:rgba(128,128,128,0.55);"></div>
<div style="position:absolute;left:1050px;top:74px;width:1px;height:417px;background:rgba(128,128,128,0.16);"></div>
<div style="position:absolute;left:1082px;top:74px;width:1px;height:417px;background:rgba(128,128,128,0.16);"></div>
<div style="position:absolute;left:1114px;top:74px;width:1px;height:417px;background:rgba(128,128,128,0.16);"></div>
<div style="position:absolute;left:274px;top:86px;width:856px;height:1px;background:rgba(128,128,128,0.16);"></div>
<div style="position:absolute;left:274px;top:119px;width:856px;height:1px;background:rgba(128,128,128,0.16);"></div>
<div style="position:absolute;left:274px;top:151px;width:856px;height:1px;background:rgba(128,128,128,0.16);"></div>
<div style="position:absolute;left:274px;top:183px;width:856px;height:1px;background:rgba(128,128,128,0.16);"></div>
<div style="position:absolute;left:274px;top:216px;width:856px;height:1px;background:rgba(128,128,128,0.16);"></div>
<div style="position:absolute;left:274px;top:248px;width:856px;height:1px;background:rgba(128,128,128,0.16);"></div>
<div style="position:absolute;left:274px;top:280px;width:856px;height:1px;background:rgba(128,128,128,0.16);"></div>
<div style="position:absolute;left:274px;top:313px;width:856px;height:1px;background:rgba(128,128,128,0.16);"></div>
<div style="position:absolute;left:274px;top:345px;width:856px;height:1px;background:rgba(128,128,128,0.55);"></div>
<div style="position:absolute;left:274px;top:377px;width:856px;height:1px;background:rgba(128,128,128,0.16);"></div>
<div style="position:absolute;left:274px;top:410px;width:856px;height:1px;background:rgba(128,128,128,0.16);"></div>
<div style="position:absolute;left:274px;top:442px;width:856px;height:1px;background:rgba(128,128,128,0.16);"></div>
<div style="position:absolute;left:274px;top:474px;width:856px;height:1px;background:rgba(128,128,128,0.16);"></div>
<div style="position:absolute;left:693px;top:74px;width:1px;height:272px;background:rgba(180,180,180,0.65);"></div>
<div style="position:absolute;left:693px;top:345px;width:437px;height:1px;background:rgba(180,180,180,0.65);"></div>
<div style="position:absolute;left:276px;top:76px;width:43px;height:145px;background:#121212;border-radius:5px;"></div>
<div style="position:absolute;left:290px;top:82px;width:16px;height:1px;background:#9a9a9a;"></div>
<div style="position:absolute;left:290px;top:85px;width:16px;height:1px;background:#9a9a9a;"></div>
<div style="position:absolute;left:279px;top:93px;width:37px;height:20px;background:#585858;border-radius:4px 4px 0 0;"></div>
<div style="position:absolute;left:279px;top:114px;width:37px;height:20px;background:#585858;"></div>
<div style="position:absolute;left:279px;top:135px;width:37px;height:20px;background:#585858;"></div>
<div style="position:absolute;left:279px;top:156px;width:37px;height:20px;background:#585858;"></div>
<div style="position:absolute;left:279px;top:177px;width:37px;height:20px;background:#46607c;"></div>
<div style="position:absolute;left:279px;top:198px;width:37px;height:20px;background:#585858;border-radius:0 0 4px 4px;"></div>
<svg style="position:absolute;left:287px;top:93px;" width="22" height="20" viewBox="0 0 22 20"><g stroke="#c8c8c8" stroke-width="1.9" stroke-linecap="round"><path d="M4.9 8.7 L7.8 12.5 M8 3.6 V10 M11.3 2.7 V9.5 M14.4 3.7 V10 M17.1 6.6 L15.7 11"/></g><path d="M7 8.8 H16.6 L15.8 13.5 L14.2 17 H8.3 L6.4 13 Z" fill="#c8c8c8"/></svg>
<svg style="position:absolute;left:287px;top:114px;" width="22" height="20" viewBox="0 0 22 20"><g fill="#c8c8c8"><path d="M11 1.6 L14 4.8 H8 Z"/><path d="M11 18.4 L14 15.2 H8 Z"/><path d="M2.8 10 L6 7 V13 Z"/><path d="M19.2 10 L16 7 V13 Z"/></g><g stroke="#a8a8a8" stroke-width="1.1"><path d="M11 4.8 V8.2 M11 11.8 V15.2 M6 10 H9.2 M12.8 10 H16"/></g></svg>
<svg style="position:absolute;left:287px;top:135px;" width="22" height="20" viewBox="0 0 22 20"><g fill="none" stroke="#c8c8c8" stroke-width="1.2"><path d="M11 3.6 A6.6 6.6 0 0 0 6 14.8"/><path d="M11.6 16.6 A6.6 6.6 0 0 0 14.6 4.4"/><path d="M4.6 16.4 H8.8 V12.4"/><path d="M17.6 3.6 H13.4 V7.6"/></g><path d="M4.2 16.8 L8.2 12.6 L8.6 16.8 Z" fill="#c8c8c8"/><path d="M13.2 3.2 L17.6 3.4 L13.6 7.6 Z" fill="#c8c8c8"/></svg>
<svg style="position:absolute;left:287px;top:156px;" width="22" height="20" viewBox="0 0 22 20"><rect x="4.5" y="3.5" width="13" height="13" fill="none" stroke="#c8c8c8" stroke-width="1.2"/><rect x="4.5" y="12.5" width="4" height="4" fill="none" stroke="#c8c8c8" stroke-width="1.2"/><path d="M9.5 11.5 L15 6 M11.5 6 H15 V9.5" fill="none" stroke="#c8c8c8" stroke-width="1.2"/></svg>
<svg style="position:absolute;left:287px;top:177px;" width="22" height="20" viewBox="0 0 22 20"><g fill="#f2f2f2"><rect x="4" y="3" width="3" height="3"/><rect x="15" y="3" width="3" height="3"/><rect x="4" y="14" width="3" height="3"/><rect x="15" y="14" width="3" height="3"/></g><g stroke="#eeeeee" stroke-width="1.1"><path d="M8 4.5 H14 M8 15.5 H14 M5.5 7 V13 M16.5 7 V13"/></g></svg>
<svg style="position:absolute;left:287px;top:198px;" width="22" height="20" viewBox="0 0 22 20"><g fill="none" stroke="#c8c8c8" stroke-width="1.2"><path d="M9.9 3.2 A6.9 6.9 0 0 0 4.2 8.9"/><path d="M12.1 3.2 A6.9 6.9 0 0 1 17.8 8.9"/><path d="M4.2 11.1 A6.9 6.9 0 0 0 9.9 16.8"/><path d="M17.8 11.1 A6.9 6.9 0 0 1 12.1 16.8"/></g><g stroke="#b4b4b4" stroke-width="1.3"><path d="M11 6 V14 M7 10 H15"/></g><g fill="#c8c8c8"><path d="M11 5 L12.6 6.6 H9.4 Z"/><path d="M11 15 L12.6 13.4 H9.4 Z"/><path d="M6 10 L7.6 8.4 V11.6 Z"/><path d="M16 10 L14.4 8.4 V11.6 Z"/><path d="M16.2 2 H19 V4.8 Z"/><path d="M3 15.2 L5.8 18 H3 Z"/></g></svg>
<div style="position:absolute;left:0px;top:493px;width:1130px;height:19px;background:#282828;"></div>
<div style="position:absolute;left:0px;top:493px;width:76px;height:19px;background:#3c3c3c;"></div>
<div style="position:absolute;left:0px;top:493px;width:76px;height:2px;background:#2f6db3;"></div>
<div style="position:absolute;left:0px;top:512px;width:1130px;height:20px;background:#3c3c3c;"></div>
<div style="position:absolute;left:0px;top:532px;width:1130px;height:1px;background:#232323;"></div>
<div style="position:absolute;left:0px;top:533px;width:250px;height:261px;background:#383838;"></div>
<div style="position:absolute;left:250px;top:533px;width:12px;height:261px;background:#2f2f2f;"></div>
<div style="position:absolute;left:262px;top:533px;width:1px;height:261px;background:#232323;"></div>
<div style="position:absolute;left:263px;top:533px;width:867px;height:20px;background:#414141;"></div>
<div style="position:absolute;left:263px;top:552px;width:867px;height:1px;background:#464646;"></div>
<div style="position:absolute;left:263px;top:553px;width:867px;height:1px;background:#262626;"></div>
<div style="position:absolute;left:263px;top:554px;width:867px;height:219px;background:#323232;"></div>
<div style="position:absolute;left:263px;top:773px;width:867px;height:1px;background:#232323;"></div>
<div style="position:absolute;left:263px;top:774px;width:867px;height:20px;background:#414141;"></div>
<div style="position:absolute;left:0px;top:794px;width:1130px;height:1px;background:#191919;"></div>
<svg style="position:absolute;left:3px;top:497px;" width="12" height="11" viewBox="0 0 12 11"><path d="M0.5 1 H4.6 L6 2.6 H11.5 V10.5 H0.5 Z" fill="#d0d0d0"/></svg>
<div class="t" style="left:19px;top:496px;font-size:12.5px;line-height:16px;color:#d2d2d2;font-weight:normal;">Project</div>
<svg style="position:absolute;left:86px;top:496px;" width="10" height="12" viewBox="0 0 10 12"><rect x="0.5" y="0.5" width="9.5" height="11" rx="1" fill="#d0d0d0"/><g fill="#282828"><rect x="2" y="2.5" width="6.5" height="1.2"/><rect x="2" y="5" width="6.5" height="1.2"/><rect x="2" y="7.5" width="4.5" height="1.2"/></g></svg>
<div class="t" style="left:101px;top:496px;font-size:12.5px;line-height:16px;color:#d2d2d2;font-weight:normal;">Console</div>
<svg style="position:absolute;left:1097px;top:497px;" width="10" height="12" viewBox="0 0 10 12"><rect x="1.6" y="6.7" width="7.3" height="3.9" fill="none" stroke="#cfcfcf" stroke-width="1.3"/><path d="M7.3 6.4 V4.2 A2.5 2.5 0 0 0 2.4 3.3" fill="none" stroke="#cfcfcf" stroke-width="1.3"/></svg>
<svg style="position:absolute;left:1117px;top:497px;" width="4" height="11" viewBox="0 0 4 11"><g fill="#cfcfcf"><rect x="0.5" y="0.3" width="2.2" height="2.2"/><rect x="0.5" y="4.2" width="2.2" height="2.2"/><rect x="0.5" y="8.1" width="2.2" height="2.2"/></g></svg>
<svg style="position:absolute;left:3px;top:516px;" width="12" height="12" viewBox="0 0 12 12"><rect x="0" y="5" width="12" height="1.8" fill="#d8d8d8"/><rect x="5.1" y="0" width="1.8" height="12" fill="#d8d8d8"/></svg>
<svg style="position:absolute;left:19px;top:520px;" width="8" height="5" viewBox="0 0 8 5"><path d="M0 0 L8 0 L4 5 Z" fill="#cfcfcf"/></svg>
<div style="position:absolute;left:695px;top:514px;width:317px;height:16px;background:#2a2a2a;border-radius:4px;box-sizing:border-box;border:1px solid #212121;"></div>
<div style="position:absolute;left:995px;top:515px;width:16px;height:14px;background:#383838;border-radius:0 3px 3px 0;"></div>
<svg style="position:absolute;left:698px;top:518px;" width="8" height="8" viewBox="0 0 8 8"><circle cx="3" cy="3" r="2.1" fill="none" stroke="#c8c8c8" stroke-width="1.2"/><path d="M4.6 4.6 L6.8 6.8" stroke="#c8c8c8" stroke-width="1.4"/></svg>
<svg style="position:absolute;left:997px;top:516px;" width="12" height="12" viewBox="0 0 12 12"><rect x="2.5" y="0.5" width="9" height="9" rx="1" fill="none" stroke="#cfcfcf" stroke-width="1.1"/><rect x="0.5" y="7.5" width="4" height="4" fill="#383838" stroke="#cfcfcf" stroke-width="1.1"/><path d="M4.5 7.5 L9 3 M6 3 H9 V6" fill="none" stroke="#cfcfcf" stroke-width="1.1"/></svg>
<div style="position:absolute;left:1014px;top:512px;width:1px;height:20px;background:#2a2a2a;"></div>
<div style="position:absolute;left:1040px;top:512px;width:1px;height:20px;background:#2a2a2a;"></div>
<div style="position:absolute;left:1066px;top:512px;width:1px;height:20px;background:#2a2a2a;"></div>
<div style="position:absolute;left:1092px;top:512px;width:1px;height:20px;background:#2a2a2a;"></div>
<svg style="position:absolute;left:1020px;top:515px;" width="14" height="14" viewBox="0 0 14 14"><rect x="2" y="0.4" width="5" height="5.2" fill="#c8c8c8"/><circle cx="4.3" cy="9.3" r="3.7" fill="#c8c8c8"/><path d="M10 3.4 L13.2 8.8 H7 Z" fill="#c8c8c8"/></svg>
<svg style="position:absolute;left:1046px;top:515px;" width="12" height="12" viewBox="0 0 12 12"><path d="M0.5 6 L6 0.5 H11.5 V6 L6 11.5 Z" fill="#c8c8c8"/><circle cx="8.6" cy="3.4" r="1.1" fill="#3c3c3c"/></svg>
<svg style="position:absolute;left:1072px;top:516px;" width="13" height="13" viewBox="0 0 13 13"><path d="M6.5 0.3 L8.3 4.4 L12.7 4.7 L9.3 7.6 L10.4 11.9 L6.5 9.5 L2.6 11.9 L3.7 7.6 L0.3 4.7 L4.7 4.4 Z" fill="#8a8a8a"/></svg>
<svg style="position:absolute;left:1097px;top:515.5px;" width="16" height="13" viewBox="0 0 16 13"><path d="M0.8 6.5 Q7 0.8 13.2 6.5 Q7 12.2 0.8 6.5 Z" fill="none" stroke="#c8c8c8" stroke-width="1.2"/><circle cx="7" cy="6.5" r="2" fill="none" stroke="#c8c8c8" stroke-width="1.1"/><path d="M1.5 12.5 L13 0.8" stroke="#3c3c3c" stroke-width="2.6"/><path d="M1.5 12.5 L13 0.8" stroke="#c8c8c8" stroke-width="1.2"/></svg>
<div class="t" style="left:1112.5px;top:514.5px;font-size:11.8px;line-height:16px;color:#c8c8c8;font-weight:normal;">12</div>
<svg style="position:absolute;left:28px;top:537px;" width="13" height="13" viewBox="0 0 13 13"><circle cx="4.9" cy="4.9" r="4" fill="none" stroke="#c8c8c8" stroke-width="1.2"/><path d="M7.8 7.8 L11.8 11.8" stroke="#c8c8c8" stroke-width="1.6"/></svg>
<div class="t" style="left:43.7px;top:535px;font-size:12.5px;line-height:16px;color:#d2d2d2;font-weight:normal;">All Materials</div>
<svg style="position:absolute;left:28px;top:553px;" width="13" height="13" viewBox="0 0 13 13"><circle cx="4.9" cy="4.9" r="4" fill="none" stroke="#c8c8c8" stroke-width="1.2"/><path d="M7.8 7.8 L11.8 11.8" stroke="#c8c8c8" stroke-width="1.6"/></svg>
<div class="t" style="left:43.7px;top:551px;font-size:12.5px;line-height:16px;color:#d2d2d2;font-weight:normal;">All Models</div>
<svg style="position:absolute;left:28px;top:569px;" width="13" height="13" viewBox="0 0 13 13"><circle cx="4.9" cy="4.9" r="4" fill="none" stroke="#c8c8c8" stroke-width="1.2"/><path d="M7.8 7.8 L11.8 11.8" stroke="#c8c8c8" stroke-width="1.6"/></svg>
<div class="t" style="left:43.7px;top:567px;font-size:12.5px;line-height:16px;color:#d2d2d2;font-weight:normal;">All Prefabs</div>
<svg style="position:absolute;left:28px;top:585px;" width="13" height="13" viewBox="0 0 13 13"><circle cx="4.9" cy="4.9" r="4" fill="none" stroke="#c8c8c8" stroke-width="1.2"/><path d="M7.8 7.8 L11.8 11.8" stroke="#c8c8c8" stroke-width="1.6"/></svg>
<div class="t" style="left:43.7px;top:583px;font-size:12.5px;line-height:16px;color:#d2d2d2;font-weight:normal;">All Scripts</div>
<div style="position:absolute;left:0px;top:726px;width:250px;height:16px;background:#4d4d4d;"></div>
<svg style="position:absolute;left:-1px;top:619px;" width="10" height="9" viewBox="0 0 10 9"><path d="M0.5 0.5 L9.5 0.5 L5 8.5 Z" fill="#7d7d7d"/></svg>
<svg style="position:absolute;left:14px;top:617px;" width="14" height="11" viewBox="0 0 14 11"><path d="M0.6 10 V1 H4.4 L5.6 2.4 H11 V4" fill="none" stroke="#c6c6c6" stroke-width="1.2"/><path d="M0.6 10.4 L3 4.6 H13.6 L11.2 10.4 Z" fill="#c6c6c6"/></svg>
<div class="t" style="left:30px;top:614px;font-size:12.5px;line-height:16px;color:#d2d2d2;font-weight:bold;">Assets</div>
<svg style="position:absolute;left:13px;top:635px;" width="10" height="9" viewBox="0 0 10 9"><path d="M0.5 0.5 L9.5 0.5 L5 8.5 Z" fill="#7d7d7d"/></svg>
<svg style="position:absolute;left:28px;top:633px;" width="14" height="11" viewBox="0 0 14 11"><path d="M0.6 10 V1 H4.4 L5.6 2.4 H11 V4" fill="none" stroke="#c6c6c6" stroke-width="1.2"/><path d="M0.6 10.4 L3 4.6 H13.6 L11.2 10.4 Z" fill="#c6c6c6"/></svg>
<div class="t" style="left:44px;top:630px;font-size:12.5px;line-height:16px;color:#d2d2d2;font-weight:normal;">Settings</div>
<svg style="position:absolute;left:42px;top:649px;" width="13" height="11" viewBox="0 0 13 11"><path d="M0 1 a1 1 0 0 1 1 -1 H4.6 L6 1.8 H11.5 a1 1 0 0 1 1 1 V9.5 a1 1 0 0 1 -1 1 H1 a1 1 0 0 1 -1 -1 Z" fill="#c6c6c6"/></svg>
<div class="t" style="left:58px;top:646px;font-size:12.5px;line-height:16px;color:#d2d2d2;font-weight:normal;">Scenes</div>
<svg style="position:absolute;left:14px;top:665px;" width="9" height="10" viewBox="0 0 9 10"><path d="M0.5 0.5 L8.5 5 L0.5 9.5 Z" fill="#7d7d7d"/></svg>
<svg style="position:absolute;left:28px;top:665px;" width="13" height="11" viewBox="0 0 13 11"><path d="M0 1 a1 1 0 0 1 1 -1 H4.6 L6 1.8 H11.5 a1 1 0 0 1 1 1 V9.5 a1 1 0 0 1 -1 1 H1 a1 1 0 0 1 -1 -1 Z" fill="#c6c6c6"/></svg>
<div class="t" style="left:44px;top:662px;font-size:12.5px;line-height:16px;color:#d2d2d2;font-weight:normal;">Standard Assets</div>
<svg style="position:absolute;left:13px;top:683px;" width="10" height="9" viewBox="0 0 10 9"><path d="M0.5 0.5 L9.5 0.5 L5 8.5 Z" fill="#7d7d7d"/></svg>
<svg style="position:absolute;left:28px;top:681px;" width="14" height="11" viewBox="0 0 14 11"><path d="M0.6 10 V1 H4.4 L5.6 2.4 H11 V4" fill="none" stroke="#c6c6c6" stroke-width="1.2"/><path d="M0.6 10.4 L3 4.6 H13.6 L11.2 10.4 Z" fill="#c6c6c6"/></svg>
<div class="t" style="left:44px;top:678px;font-size:12.5px;line-height:16px;color:#d2d2d2;font-weight:normal;">WarpWorld</div>
<svg style="position:absolute;left:42px;top:697px;" width="13" height="11" viewBox="0 0 13 11"><path d="M0 1 a1 1 0 0 1 1 -1 H4.6 L6 1.8 H11.5 a1 1 0 0 1 1 1 V9.5 a1 1 0 0 1 -1 1 H1 a1 1 0 0 1 -1 -1 Z" fill="#c6c6c6"/></svg>
<div class="t" style="left:58px;top:694px;font-size:12.5px;line-height:16px;color:#d2d2d2;font-weight:normal;">Icons</div>
<svg style="position:absolute;left:28px;top:713px;" width="9" height="10" viewBox="0 0 9 10"><path d="M0.5 0.5 L8.5 5 L0.5 9.5 Z" fill="#7d7d7d"/></svg>
<svg style="position:absolute;left:42px;top:713px;" width="13" height="11" viewBox="0 0 13 11"><path d="M0 1 a1 1 0 0 1 1 -1 H4.6 L6 1.8 H11.5 a1 1 0 0 1 1 1 V9.5 a1 1 0 0 1 -1 1 H1 a1 1 0 0 1 -1 -1 Z" fill="#c6c6c6"/></svg>
<div class="t" style="left:58px;top:710px;font-size:12.5px;line-height:16px;color:#d2d2d2;font-weight:normal;">Managed</div>
<svg style="position:absolute;left:28px;top:729px;" width="9" height="10" viewBox="0 0 9 10"><path d="M0.5 0.5 L8.5 5 L0.5 9.5 Z" fill="#7d7d7d"/></svg>
<svg style="position:absolute;left:42px;top:729px;" width="13" height="11" viewBox="0 0 13 11"><path d="M0 1 a1 1 0 0 1 1 -1 H4.6 L6 1.8 H11.5 a1 1 0 0 1 1 1 V9.5 a1 1 0 0 1 -1 1 H1 a1 1 0 0 1 -1 -1 Z" fill="#c6c6c6"/></svg>
<div class="t" style="left:58px;top:726px;font-size:12.5px;line-height:16px;color:#d2d2d2;font-weight:normal;">Materials</div>
<svg style="position:absolute;left:28px;top:745px;" width="9" height="10" viewBox="0 0 9 10"><path d="M0.5 0.5 L8.5 5 L0.5 9.5 Z" fill="#7d7d7d"/></svg>
<svg style="position:absolute;left:42px;top:745px;" width="13" height="11" viewBox="0 0 13 11"><path d="M0 1 a1 1 0 0 1 1 -1 H4.6 L6 1.8 H11.5 a1 1 0 0 1 1 1 V9.5 a1 1 0 0 1 -1 1 H1 a1 1 0 0 1 -1 -1 Z" fill="#c6c6c6"/></svg>
<div class="t" style="left:58px;top:742px;font-size:12.5px;line-height:16px;color:#d2d2d2;font-weight:normal;">Prefabs</div>
<svg style="position:absolute;left:28px;top:761px;" width="9" height="10" viewBox="0 0 9 10"><path d="M0.5 0.5 L8.5 5 L0.5 9.5 Z" fill="#7d7d7d"/></svg>
<svg style="position:absolute;left:42px;top:761px;" width="13" height="11" viewBox="0 0 13 11"><path d="M0 1 a1 1 0 0 1 1 -1 H4.6 L6 1.8 H11.5 a1 1 0 0 1 1 1 V9.5 a1 1 0 0 1 -1 1 H1 a1 1 0 0 1 -1 -1 Z" fill="#c6c6c6"/></svg>
<div class="t" style="left:58px;top:758px;font-size:12.5px;line-height:16px;color:#d2d2d2;font-weight:normal;">Scripts</div>
<svg style="position:absolute;left:0px;top:777px;" width="9" height="10" viewBox="0 0 9 10"><path d="M0.5 0.5 L8.5 5 L0.5 9.5 Z" fill="#7d7d7d"/></svg>
<svg style="position:absolute;left:14px;top:777px;" width="13" height="11" viewBox="0 0 13 11"><path d="M0 1 a1 1 0 0 1 1 -1 H4.6 L6 1.8 H11.5 a1 1 0 0 1 1 1 V9.5 a1 1 0 0 1 -1 1 H1 a1 1 0 0 1 -1 -1 Z" fill="#c6c6c6"/></svg>
<div class="t" style="left:30px;top:774px;font-size:12.5px;line-height:16px;color:#d2d2d2;font-weight:bold;">Packages</div>
<svg style="position:absolute;left:252px;top:538px;" width="9" height="6" viewBox="0 0 9 6"><path d="M0.5 5.5 L4.5 0.5 L8.5 5.5 Z" fill="#c8c8c8"/></svg>
<div style="position:absolute;left:251px;top:560px;width:10px;height:218px;background:#5f5f5f;border-radius:5px;"></div>
<svg style="position:absolute;left:252px;top:784px;" width="8" height="5" viewBox="0 0 8 5"><path d="M0 0 L8 0 L4 4.4 Z" fill="#c8c8c8"/></svg>
<div class="t" style="left:267px;top:535px;font-size:12.5px;line-height:16px;color:#d2d2d2;font-weight:normal;">Assets</div>
<svg style="position:absolute;left:310px;top:538px;" width="6" height="10" viewBox="0 0 6 10"><path d="M1 1 L5 5 L1 9" fill="none" stroke="#9a9a9a" stroke-width="1.2"/></svg>
<div class="t" style="left:322.2px;top:535px;font-size:12.5px;line-height:16px;color:#d2d2d2;font-weight:normal;">WarpWorld</div>
<svg style="position:absolute;left:389px;top:538px;" width="6" height="10" viewBox="0 0 6 10"><path d="M1 1 L5 5 L1 9" fill="none" stroke="#9a9a9a" stroke-width="1.2"/></svg>
<div class="t" style="left:401px;top:535px;font-size:12.5px;line-height:16px;color:#d2d2d2;font-weight:bold;">Materials</div>
<svg style="position:absolute;left:463px;top:538px;" width="6" height="10" viewBox="0 0 6 10"><path d="M1 1 L5 5 L1 9" fill="none" stroke="#9a9a9a" stroke-width="1.2"/></svg>
<svg style="position:absolute;left:286px;top:576px;" width="48" height="40" viewBox="0 0 48 40"><path d="M0 4 a4 4 0 0 1 4 -4 H19.5 a2 2 0 0 1 1.7 1 L25 8 H44 a4 4 0 0 1 4 4 V36 a4 4 0 0 1 -4 4 H4 a4 4 0 0 1 -4 -4 Z" fill="#c4c4c4"/></svg>
<div class="t" style="left:291.296875px;top:628px;font-size:10.7px;line-height:16px;color:#c4c4c4;font-weight:normal;letter-spacing:0px;">Lighting</div>
<div style="position:absolute;left:356px;top:566px;width:60px;height:60px;background:#464b55;box-shadow:0 0 0 1px rgba(0,0,0,0.22);"></div>
<svg style="position:absolute;left:358px;top:568px;" width="56" height="56" viewBox="0 0 56 56"><circle cx="28" cy="28" r="27.6" fill="#d900ff"/></svg>
<div style="position:absolute;left:369px;top:629px;width:33px;height:14px;background:#2c5d87;border-radius:3px;"></div>
<div class="t" style="left:372.046875px;top:628px;font-size:10.7px;line-height:16px;color:#e8e8e8;font-weight:normal;letter-spacing:0px;">Bomb</div>
<div style="position:absolute;left:432px;top:566px;width:60px;height:60px;background:#464b55;box-shadow:0 0 0 1px rgba(0,0,0,0.22);"></div>
<svg style="position:absolute;left:434px;top:568px;" width="56" height="56" viewBox="0 0 56 56"><circle cx="28" cy="28" r="27.6" fill="#d900ff"/></svg>
<div style="position:absolute;left:443px;top:629px;width:38px;height:14px;background:#2c5d87;border-radius:3px;"></div>
<div class="t" style="left:445.671875px;top:628px;font-size:10.7px;line-height:16px;color:#e8e8e8;font-weight:normal;letter-spacing:0px;">Ceiling</div>
<div style="position:absolute;left:508px;top:566px;width:60px;height:60px;background:#464b55;box-shadow:0 0 0 1px rgba(0,0,0,0.22);"></div>
<svg style="position:absolute;left:510px;top:568px;" width="56" height="56" viewBox="0 0 56 56"><circle cx="28" cy="28" r="27.6" fill="#d900ff"/></svg>
<div style="position:absolute;left:524px;top:629px;width:27px;height:14px;background:#2c5d87;border-radius:3px;"></div>
<div class="t" style="left:527.015625px;top:628px;font-size:10.7px;line-height:16px;color:#e8e8e8;font-weight:normal;letter-spacing:0px;">Coin</div>
<div style="position:absolute;left:584px;top:566px;width:60px;height:60px;background:#464b55;box-shadow:0 0 0 1px rgba(0,0,0,0.22);"></div>
<svg style="position:absolute;left:586px;top:568px;" width="56" height="56" viewBox="0 0 56 56"><circle cx="28" cy="28" r="27.6" fill="#d900ff"/></svg>
<div style="position:absolute;left:599px;top:629px;width:30px;height:14px;background:#2c5d87;border-radius:3px;"></div>
<div class="t" style="left:601.828125px;top:628px;font-size:10.7px;line-height:16px;color:#e8e8e8;font-weight:normal;letter-spacing:0px;">Floor</div>
<div style="position:absolute;left:660px;top:566px;width:60px;height:60px;background:#464b55;box-shadow:0 0 0 1px rgba(0,0,0,0.22);"></div>
<svg style="position:absolute;left:662px;top:568px;" width="56" height="56" viewBox="0 0 56 56"><circle cx="28" cy="28" r="27.6" fill="#d900ff"/></svg>
<div style="position:absolute;left:657px;top:629px;width:65px;height:14px;background:#2c5d87;border-radius:3px;"></div>
<div class="t" style="left:660.28125px;top:628px;font-size:10.7px;line-height:16px;color:#e8e8e8;font-weight:normal;letter-spacing:-0.35px;">GridBox_D…</div>
<svg style="position:absolute;left:750px;top:580px;filter:drop-shadow(0 0 1px rgba(0,0,0,0.5));" width="32" height="32" viewBox="0 0 32 32"><rect x="0" y="0" width="16" height="16" fill="#ffffff"/><rect x="16" y="0" width="16" height="16" fill="#c4c4c4"/><rect x="0" y="16" width="16" height="16" fill="#c4c4c4"/><rect x="16" y="16" width="16" height="16" fill="#ffffff"/></svg>
<div class="t" style="left:736.28125px;top:628px;font-size:10.7px;line-height:16px;color:#c4c4c4;font-weight:normal;letter-spacing:-0.35px;">GridBox_D…</div>
<div style="position:absolute;left:812px;top:566px;width:60px;height:60px;background:#464b55;box-shadow:0 0 0 1px rgba(0,0,0,0.22);"></div>
<svg style="position:absolute;left:814px;top:568px;" width="56" height="56" viewBox="0 0 56 56"><circle cx="28" cy="28" r="27.6" fill="#d900ff"/></svg>
<div style="position:absolute;left:819px;top:629px;width:45px;height:14px;background:#2c5d87;border-radius:3px;"></div>
<div class="t" style="left:822.109375px;top:628px;font-size:10.7px;line-height:16px;color:#e8e8e8;font-weight:normal;letter-spacing:0px;">Platform</div>
<div style="position:absolute;left:888px;top:566px;width:60px;height:60px;background:#464b55;box-shadow:0 0 0 1px rgba(0,0,0,0.22);"></div>
<svg style="position:absolute;left:890px;top:568px;" width="56" height="56" viewBox="0 0 56 56"><circle cx="28" cy="28" r="27.6" fill="#d900ff"/></svg>
<div style="position:absolute;left:900px;top:629px;width:36px;height:14px;background:#2c5d87;border-radius:3px;"></div>
<div class="t" style="left:902.859375px;top:628px;font-size:10.7px;line-height:16px;color:#e8e8e8;font-weight:normal;letter-spacing:0px;">Player</div>
<svg style="position:absolute;left:965px;top:567px;" width="60" height="58" viewBox="0 0 60 58"><circle cx="35" cy="16.9" r="16.2" fill="#b1f55b"/><path d="M35.2 0 Q36.6 15.4 52 16.6" fill="none" stroke="#333333" stroke-width="3.4"/><path d="M18.2 17.2 Q33.4 18.2 35 34" fill="none" stroke="#333333" stroke-width="3.4"/><path d="M9.2 37 H49 a1.4 1.4 0 0 1 1.3 0.9 L57.6 55 a1.4 1.4 0 0 1 -1.3 2 H1.7 a1.4 1.4 0 0 1 -1.3 -2 L7.9 37.9 a1.4 1.4 0 0 1 1.3 -0.9 Z" fill="#b1f55b"/><ellipse cx="35.6" cy="44.9" rx="10.2" ry="3.85" fill="#333333"/></svg>
<div class="t" style="left:963.565625px;top:628px;font-size:10.7px;line-height:16px;color:#c4c4c4;font-weight:normal;letter-spacing:-0.35px;">PlayerPhys…</div>
<svg style="position:absolute;left:1040px;top:566px;" width="56" height="56" viewBox="0 0 56 56"><circle cx="28" cy="28" r="24" fill="none" stroke="#7dd3fb" stroke-width="4.2"/><circle cx="22" cy="22" r="16" fill="#7dd3fb"/></svg>
<div class="t" style="left:1057.1328125px;top:628px;font-size:10.7px;line-height:16px;color:#c4c4c4;font-weight:normal;letter-spacing:0px;">Walls</div>
<svg style="position:absolute;left:267px;top:777px;" width="14" height="14" viewBox="0 0 14 14"><circle cx="6.5" cy="6.4" r="5.9" fill="none" stroke="#7dd3fb" stroke-width="1.2"/><circle cx="5.1" cy="5.3" r="4.1" fill="#7dd3fb"/></svg>
<div class="t" style="left:283px;top:776px;font-size:12.5px;line-height:16px;color:#d2d2d2;font-weight:normal;">Assets/WarpWorld/Materials/Bomb.mat</div>
<div style="position:absolute;left:1061px;top:783px;width:55px;height:2px;background:#5c5c5c;border-radius:1px;"></div>
<svg style="position:absolute;left:1087px;top:778px;" width="12" height="12" viewBox="0 0 12 12"><circle cx="5.8" cy="5.8" r="5.2" fill="#9e9e9e"/></svg>
</body></html>
